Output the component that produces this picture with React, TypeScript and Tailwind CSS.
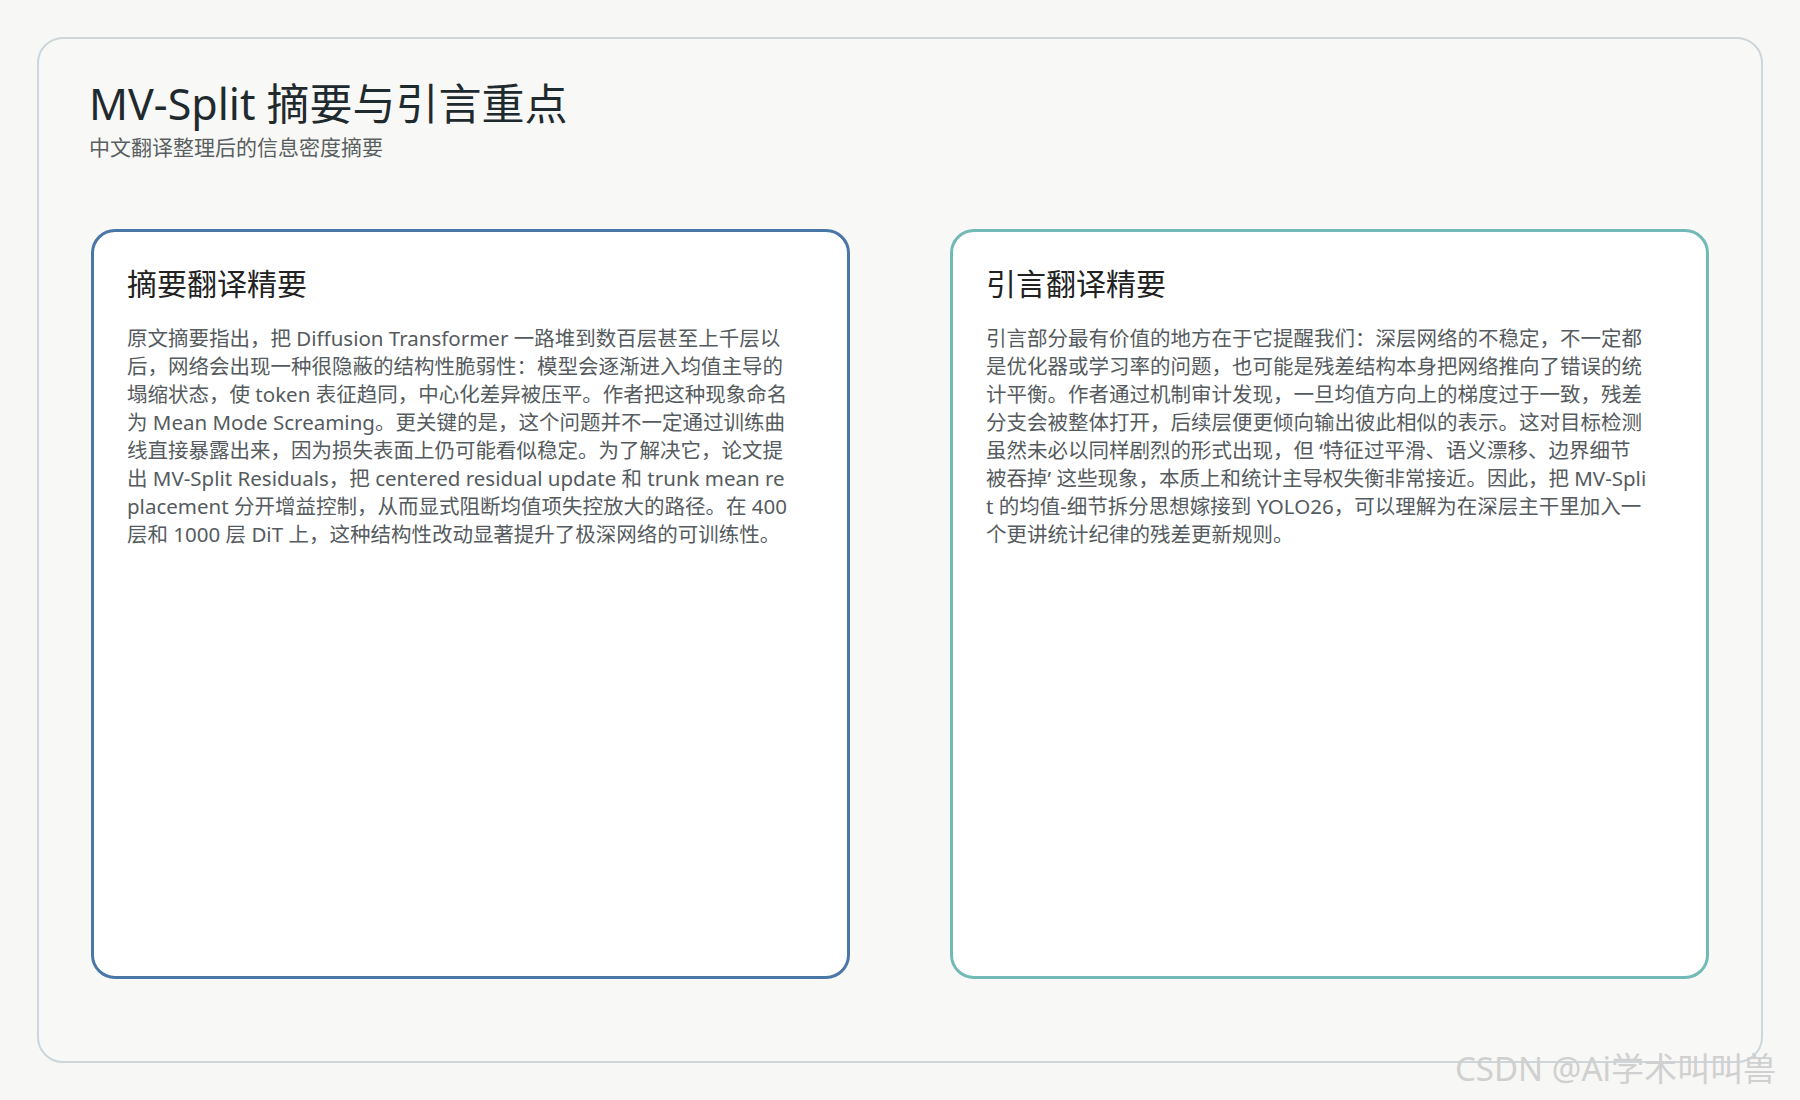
export default function App() {
  const font = { fontFamily: '"Noto Sans", "Noto Sans CJK SC", sans-serif' }
  return (
    <div className="relative w-[1800px] h-[1100px] bg-[#f7f7f5] p-[37px]" style={font}>
      <div className="h-[1026px] rounded-[26px] border-2 border-[#cdd6da] bg-[#f8f8f6] px-[50px] pt-[36px]">
        <h1 className="text-[43px] leading-[58px] text-[#1f2a2e]">MV-Split 摘要与引言重点</h1>
        <p className="text-[21px] leading-[28px] text-[#5a5f62]">中文翻译整理后的信息密度摘要</p>
        <div className="mt-[68px] flex gap-[100px] pl-[2px]">
          <Card color="border-[#4a76a8]" title="摘要翻译精要">
            原文摘要指出，把 Diffusion Transformer 一路堆到数百层甚至上千层以后，网络会出现一种很隐蔽的结构性脆弱性：模型会逐渐进入均值主导的塌缩状态，使 token 表征趋同，中心化差异被压平。作者把这种现象命名为 Mean Mode Screaming。更关键的是，这个问题并不一定通过训练曲线直接暴露出来，因为损失表面上仍可能看似稳定。为了解决它，论文提出 MV-Split Residuals，把 centered residual update 和 trunk mean replacement 分开增益控制，从而显式阻断均值项失控放大的路径。在 400 层和 1000 层 DiT 上，这种结构性改动显著提升了极深网络的可训练性。
          </Card>
          <Card color="border-[#72bab6]" title="引言翻译精要">
            引言部分最有价值的地方在于它提醒我们：深层网络的不稳定，不一定都是优化器或学习率的问题，也可能是残差结构本身把网络推向了错误的统计平衡。作者通过机制审计发现，一旦均值方向上的梯度过于一致，残差分支会被整体打开，后续层便更倾向输出彼此相似的表示。这对目标检测虽然未必以同样剧烈的形式出现，但 ‘特征过平滑、语义漂移、边界细节被吞掉’ 这些现象，本质上和统计主导权失衡非常接近。因此，把 MV-Split 的均值-细节拆分思想嫁接到 YOLO26，可以理解为在深层主干里加入一个更讲统计纪律的残差更新规则。
          </Card>
        </div>
      </div>
      <div className="absolute left-[1455px] top-[1044px] text-[33px] text-[#d0d0d0]">CSDN @Ai学术叫叫兽</div>
    </div>
  )
}

function Card({ color, title, children }: { color: string; title: string; children: React.ReactNode }) {
  return (
    <div className={`w-[759px] h-[750px] rounded-[24px] border-[3px] bg-white pl-[33px] pt-[32px] ${color}`}>
      <h2 className="text-[30px] leading-[40px] text-[#222]">{title}</h2>
      <p className="mt-[20px] w-[664px] break-all text-[20.5px] leading-[28px] text-[#555b5e]">{children}</p>
    </div>
  )
}
